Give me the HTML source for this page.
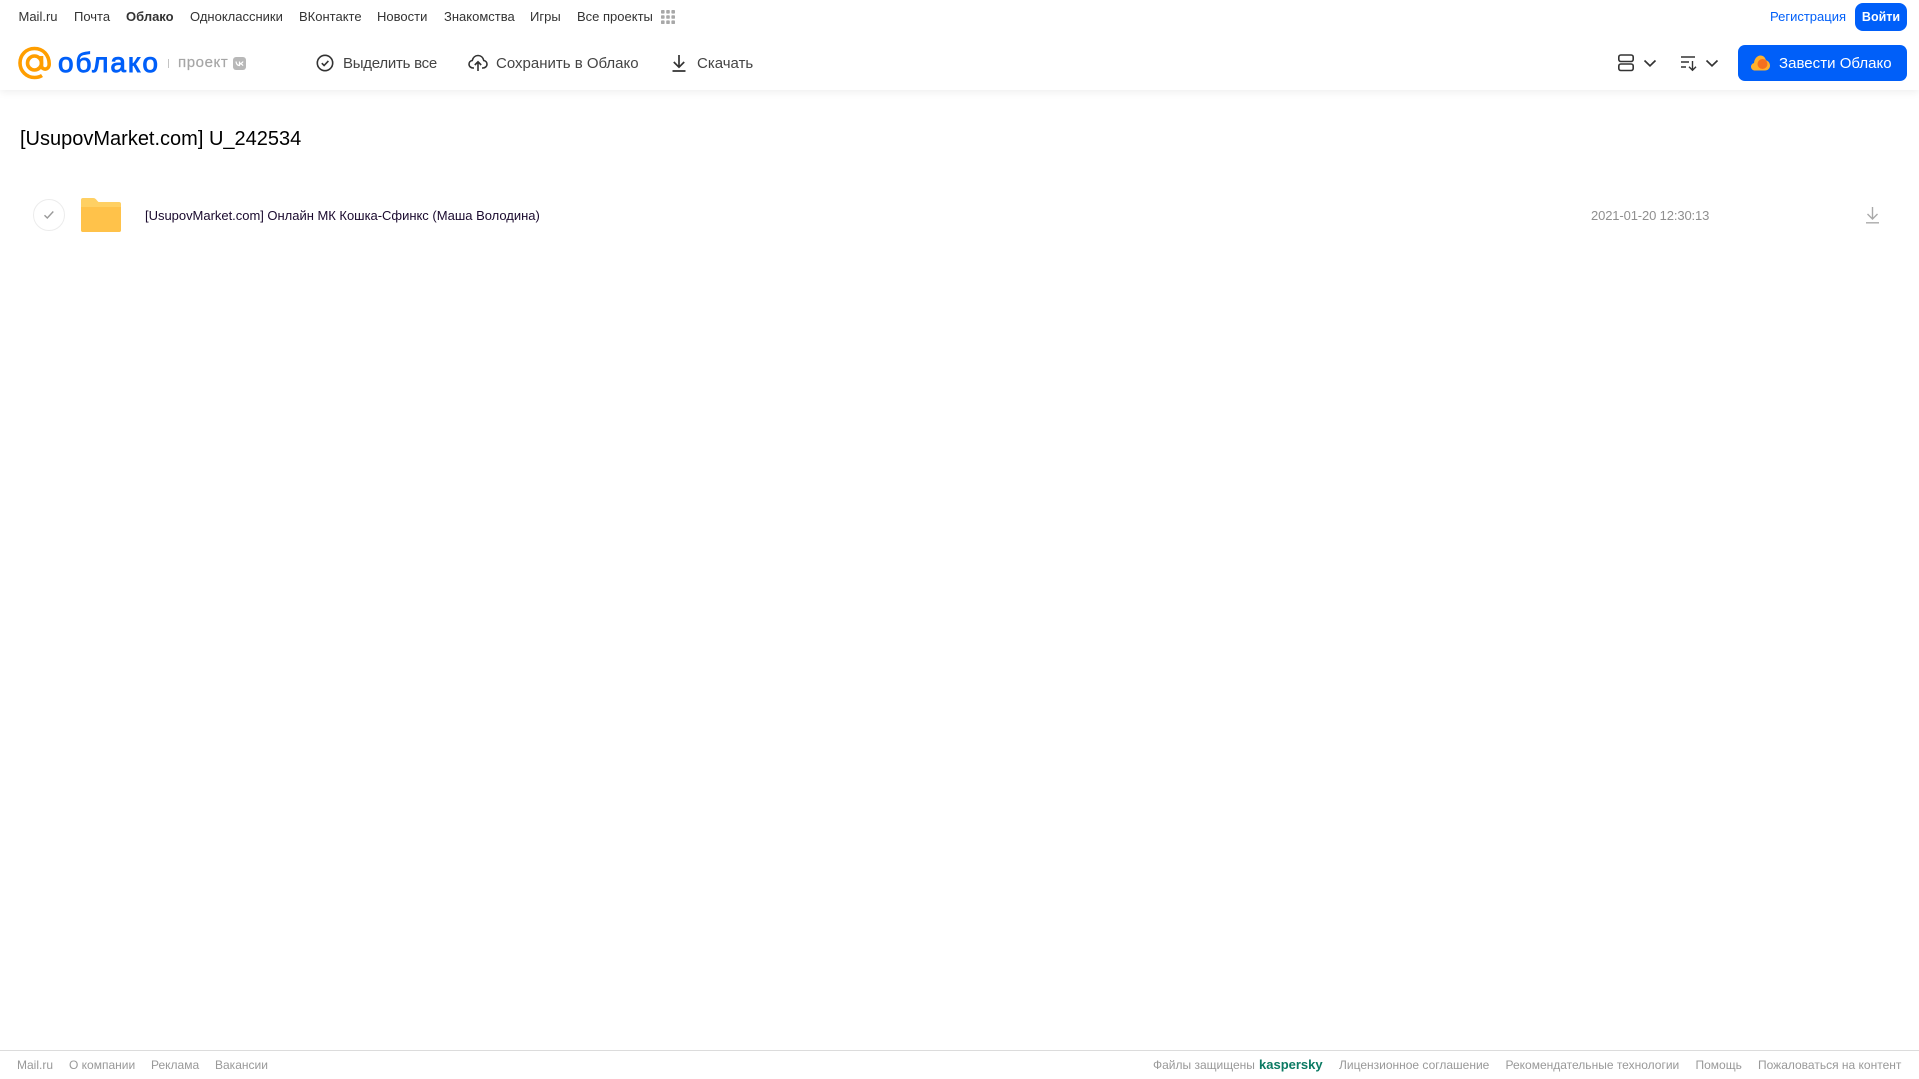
<!DOCTYPE html>
<html lang="ru">
<head>
<meta charset="utf-8">
<title>Облако</title>
<style>
html,body{margin:0;padding:0;background:#fff;}
body{width:1919px;height:1079px;position:relative;overflow:hidden;font-family:"Liberation Sans",sans-serif;}
.t{position:absolute;white-space:nowrap;line-height:20px;height:20px;}
.n{top:7px;font-size:13px;color:#333;}
.a{top:53px;font-size:15px;color:#444;line-height:22px;height:22px;}
.f{top:1055px;font-size:12px;color:#999;}
svg{position:absolute;display:block;}
#hdr{position:absolute;left:0;top:0;width:1919px;height:90px;background:#fff;box-shadow:0 2px 8px rgba(0,0,0,.07);}
#btn1{position:absolute;left:1855px;top:3px;width:52px;height:28px;background:#005ff9;border-radius:8px;color:#fff;font-size:12.5px;font-weight:bold;line-height:28px;text-align:center;}
#btn2{position:absolute;left:1738px;top:45px;width:169px;height:36px;background:#005ff9;border-radius:7px;}
#foot{position:absolute;left:0;top:1050px;width:1919px;height:1px;background:#dcdcdc;}
</style>
</head>
<body>
<div id="hdr"></div>

<span class="t n" style="left:18.500px">Mail.ru</span>
<span class="t n" style="left:74px">Почта</span>
<span class="t n" style="left:126px;font-weight:bold">Облако</span>
<span class="t n" style="left:190px">Одноклассники</span>
<span class="t n" style="left:299px">ВКонтакте</span>
<span class="t n" style="left:377px">Новости</span>
<span class="t n" style="left:444px">Знакомства</span>
<span class="t n" style="left:530px">Игры</span>
<span class="t n" style="left:577px">Все проекты</span>
<svg style="left:660px;top:9px" width="16" height="16" viewBox="0 0 16 16" fill="#a8a8a8">
<rect x="1" y="1" width="3.6" height="3.6" rx=".8"/><rect x="6.2" y="1" width="3.6" height="3.6" rx=".8"/><rect x="11.4" y="1" width="3.6" height="3.6" rx=".8"/>
<rect x="1" y="6.2" width="3.6" height="3.6" rx=".8"/><rect x="6.2" y="6.2" width="3.6" height="3.6" rx=".8"/><rect x="11.4" y="6.2" width="3.6" height="3.6" rx=".8"/>
<rect x="1" y="11.4" width="3.6" height="3.6" rx=".8"/><rect x="6.2" y="11.4" width="3.6" height="3.6" rx=".8"/><rect x="11.4" y="11.4" width="3.6" height="3.6" rx=".8"/>
</svg>

<span class="t n" style="left:1770px;color:#005ff9;">Регистрация</span>
<div id="btn1">Войти</div>

<svg style="left:18px;top:46px" width="34" height="34" viewBox="0 0 34 34" fill="none" stroke="#ff9e00" stroke-width="3.600">
<circle cx="16.500" cy="17" r="7"/>
<path d="M23.500 10v9.500c0 5 7.700 5 7.700-1.500C31.200 9 25 2.500 16.500 2.500S2 9 2 17s6.500 14.500 14.500 14.500c3 0 5.500-.7 7.500-2"/>
</svg>
<span class="t" style="left:58px;top:45px;font-size:28px;line-height:36px;height:36px;color:#005ff9;-webkit-text-stroke:.9px #005ff9;letter-spacing:1.900px">облако</span>
<div style="position:absolute;left:168px;top:59px;width:1px;height:9px;background:#c4c4c4"></div>
<span class="t" style="left:178px;top:53px;font-size:15px;color:#a6a6a6;letter-spacing:.6px;-webkit-text-stroke:.2px #a6a6a6">проект</span>
<div style="position:absolute;left:233px;top:57px;width:13px;height:13px;border-radius:3px;background:#b8b8b8"></div>
<svg style="left:233px;top:57px" width="13" height="13" viewBox="0 0 13 13" fill="none" stroke="#fff" stroke-width="1.200"><path d="M3 4.500c.3 2.500 1.500 4 3.500 4V4.500M10 4.500c-.5 1.200-1.500 2-3.500 2.200 2 .2 3 1 3.500 2"/></svg>

<svg style="left:316px;top:54px" width="18" height="18" viewBox="0 0 18 18" fill="none" stroke="#333" stroke-width="1.600">
<circle cx="9" cy="9" r="7.700"/><path d="M5.800 9.200l2.300 2.300 4.300-4.600"/>
</svg>
<span class="t a" style="left:343px;letter-spacing:-.25px">Выделить все</span>

<svg style="left:468px;top:54px" width="20" height="18" viewBox="0 0 20 18" fill="none" stroke="#333" stroke-width="1.600">
<path d="M6 14H5C2.800 14 1 12.300 1 10.200c0-1.900 1.400-3.400 3.200-3.700C5 3.500 7.300 1.500 10 1.500c2.800 0 5.100 2 5.800 5 1.800.3 3.200 1.800 3.200 3.700 0 2.100-1.800 3.800-4 3.800h-1"/>
<path d="M10 17V8M6.800 11l3.200-3.200 3.200 3.200"/>
</svg>
<span class="t a" style="left:496px">Сохранить в Облако</span>

<svg style="left:671px;top:54px" width="16" height="18" viewBox="0 0 16 18" fill="none" stroke="#333" stroke-width="1.700">
<path d="M8 1v12M2.800 8l5.200 5.200L13.200 8M1.500 17h13"/>
</svg>
<span class="t a" style="left:697px">Скачать</span>

<svg style="left:1618px;top:54px" width="16" height="18" viewBox="0 0 16 18" fill="none" stroke="#333" stroke-width="1.600">
<rect x=".8" y="1" width="14.400" height="6.500" rx="2"/><rect x=".8" y="10" width="14.400" height="6.500" rx="2"/>
</svg>
<svg style="left:1643px;top:59px" width="14" height="9" viewBox="0 0 14 9" fill="none" stroke="#333" stroke-width="1.700"><path d="M1.500 1.500L7 6.800l5.500-5.300"/></svg>
<svg style="left:1680px;top:54px" width="18" height="18" viewBox="0 0 18 18" fill="none" stroke="#333" stroke-width="1.400">
<path d="M1 3h14M1 8h8M1 13h5M12.500 7v9M9 12.800l3.500 3.500 3.500-3.500"/>
</svg>
<svg style="left:1705px;top:59px" width="14" height="9" viewBox="0 0 14 9" fill="none" stroke="#333" stroke-width="1.700"><path d="M1.500 1.500L7 6.800l5.500-5.300"/></svg>

<div id="btn2"></div>
<svg style="left:1751px;top:54px" width="19" height="17" viewBox="0 0 19 17">
<path d="M4 16.500C1.800 16.500 0 14.800 0 12.700c0-1.800 1.300-3.300 3-3.700C3.300 5 6 1.500 9.500 1.500c2.800 0 4.800 2 5.400 4.700 2.300.5 4.100 2.800 4.100 5.400 0 2.800-2.200 4.900-5 4.900z" fill="#ffb12b"/>
<circle cx="11.500" cy="10" r="5" fill="#f5701f"/>
</svg>
<span class="t" style="left:1779px;top:53px;font-size:15px;line-height:22px;height:22px;color:#fff;letter-spacing:.03px">Завести Облако</span>

<span class="t" style="left:20px;top:125px;font-size:20px;line-height:28px;height:28px;color:#000">[UsupovMarket.com] U_242534</span>

<div style="position:absolute;left:33px;top:199px;width:30px;height:30px;border:1px solid #ececec;border-radius:50%"></div>
<svg style="left:42px;top:209px" width="14" height="12" viewBox="0 0 14 12" fill="none" stroke="#999" stroke-width="1.400"><path d="M2.500 6.200l2.800 2.800 6-6.500"/></svg>

<svg style="left:81px;top:198px" width="40" height="34" viewBox="0 0 40 34">
<path d="M2 0h10c2 0 3 1 4 2.500L17.500 4H38a2 2 0 0 1 2 2v26a2 2 0 0 1-2 2H2a2 2 0 0 1-2-2V2a2 2 0 0 1 2-2z" fill="#ffd063"/>
<path d="M0 9h40v23a2 2 0 0 1-2 2H2a2 2 0 0 1-2-2z" fill="#ffc24a"/>
</svg>

<span class="t" style="left:145px;top:206px;font-size:13px;color:#1a0a2e;letter-spacing:-.02px">[UsupovMarket.com] Онлайн МК Кошка-Сфинкс (Маша Володина)</span>
<span class="t" style="left:1591px;top:206px;font-size:13px;color:#8f8f8f;letter-spacing:-.13px">2021-01-20 12:30:13</span>
<svg style="left:1865px;top:206px" width="15" height="18" viewBox="0 0 15 18" fill="none" stroke="#a9a9a9" stroke-width="1.400">
<path d="M7.500 1v12M2.500 8l5 5 5-5M1 16.800h13"/>
</svg>

<div id="foot"></div>
<span class="t f" style="left:17px">Mail.ru</span>
<span class="t f" style="left:69px">О компании</span>
<span class="t f" style="left:151px">Реклама</span>
<span class="t f" style="left:215px">Вакансии</span>
<span class="t f" style="left:1153px">Файлы защищены</span>
<span class="t" style="left:1259px;top:1055px;font-size:13px;font-weight:bold;color:#0b7a63">kaspersky</span>
<span class="t f" style="left:1339px">Лицензионное соглашение</span>
<span class="t f" style="left:1505.500px">Рекомендательные технологии</span>
<span class="t f" style="left:1695.500px">Помощь</span>
<span class="t f" style="left:1758px">Пожаловаться на контент</span>
</body>
</html>
